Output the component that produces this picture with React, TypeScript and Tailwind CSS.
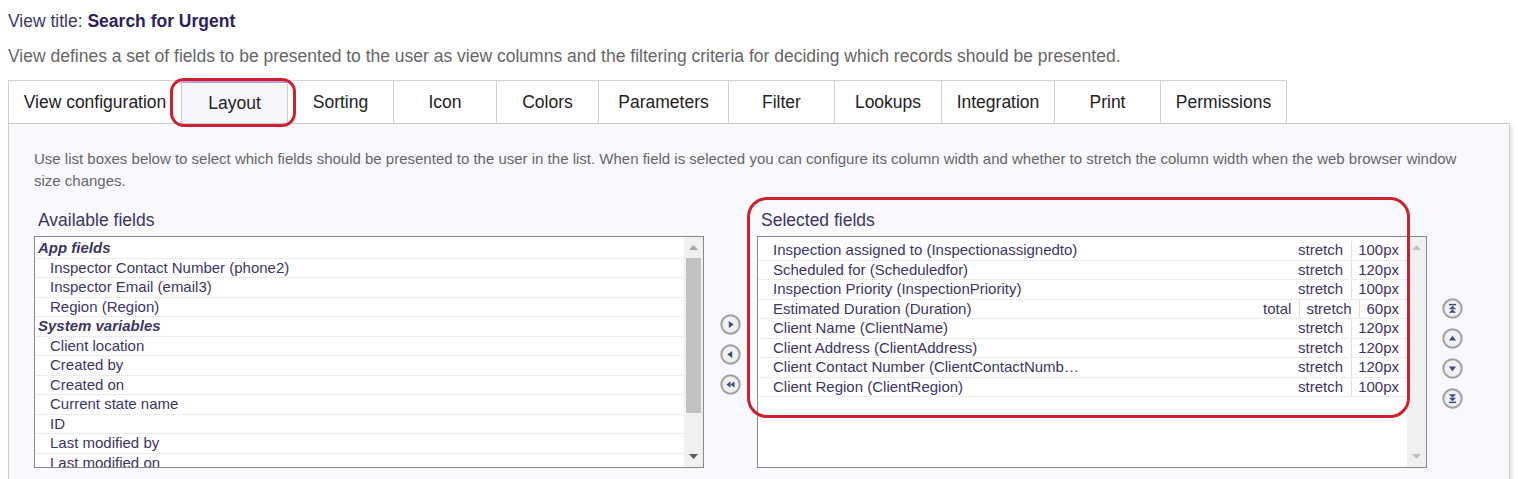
import type { ReactNode } from "react";

const tabs = [
  { label: "View configuration", w: "w-[174px]" },
  { label: "Layout", w: "w-[106px]", active: true },
  { label: "Sorting", w: "w-[106px]" },
  { label: "Icon", w: "w-[103px]" },
  { label: "Colors", w: "w-[102px]" },
  { label: "Parameters", w: "w-[130px]" },
  { label: "Filter", w: "w-[106px]" },
  { label: "Lookups", w: "w-[107px]" },
  { label: "Integration", w: "w-[113px]" },
  { label: "Print", w: "w-[106px]" },
  { label: "Permissions", w: "w-[126px]" },
];

const available: { label: string; group?: boolean }[] = [
  { label: "App fields", group: true },
  { label: "Inspector Contact Number (phone2)" },
  { label: "Inspector Email (email3)" },
  { label: "Region (Region)" },
  { label: "System variables", group: true },
  { label: "Client location" },
  { label: "Created by" },
  { label: "Created on" },
  { label: "Current state name" },
  { label: "ID" },
  { label: "Last modified by" },
  { label: "Last modified on" },
];

const selected: { label: string; width: string; total?: boolean }[] = [
  { label: "Inspection assigned to (Inspectionassignedto)", width: "100px" },
  { label: "Scheduled for (Scheduledfor)", width: "120px" },
  { label: "Inspection Priority (InspectionPriority)", width: "100px" },
  { label: "Estimated Duration (Duration)", width: "60px", total: true },
  { label: "Client Name (ClientName)", width: "120px" },
  { label: "Client Address (ClientAddress)", width: "120px" },
  { label: "Client Contact Number (ClientContactNumber)", width: "120px" },
  { label: "Client Region (ClientRegion)", width: "100px" },
];

type IconKind = "right" | "left" | "allLeft" | "top" | "up" | "down" | "bottom";

function CircleBtn({ kind }: { kind: IconKind }) {
  const arrow = "#3b4c85";
  let shapes: ReactNode = null;
  if (kind === "right") shapes = <polygon points="8.4,6.6 13,10 8.4,13.4" fill={arrow} />;
  if (kind === "left") shapes = <polygon points="11.6,6.6 7,10 11.6,13.4" fill={arrow} />;
  if (kind === "allLeft")
    shapes = (
      <>
        <polygon points="10,6.8 6.2,10 10,13.2" fill={arrow} />
        <polygon points="13.8,6.8 10,10 13.8,13.2" fill={arrow} />
      </>
    );
  if (kind === "up") shapes = <polygon points="6.6,11.8 10,7.4 13.4,11.8" fill={arrow} />;
  if (kind === "down") shapes = <polygon points="6.6,8.2 10,12.6 13.4,8.2" fill={arrow} />;
  if (kind === "top")
    shapes = (
      <>
        <rect x="6.6" y="5.6" width="6.8" height="1.4" fill={arrow} />
        <polygon points="6.6,10.6 10,7.4 13.4,10.6" fill={arrow} />
        <polygon points="6.6,14 10,10.8 13.4,14" fill={arrow} />
      </>
    );
  if (kind === "bottom")
    shapes = (
      <>
        <polygon points="6.6,6 10,9.2 13.4,6" fill={arrow} />
        <polygon points="6.6,9.4 10,12.6 13.4,9.4" fill={arrow} />
        <rect x="6.6" y="13" width="6.8" height="1.4" fill={arrow} />
      </>
    );
  return (
    <svg width="21" height="21" viewBox="0 0 20 20" className="block">
      <circle cx="10" cy="10" r="8.7" fill="#f1f1f4" stroke="#a0a0a0" strokeWidth="2" />
      <circle cx="10" cy="10" r="7.4" fill="none" stroke="#e2e2e2" strokeWidth="0.6" />
      {shapes}
    </svg>
  );
}

function Scrollbar({ thumb }: { thumb: boolean }) {
  return (
    <div className="flex w-[19px] shrink-0 flex-col bg-[#f0f0f0]">
      <div className="flex h-[21px] items-center justify-center">
        <svg width="9" height="5" viewBox="0 0 9 5">
          <polygon points="0,5 4.5,0 9,5" fill={thumb ? "#a8a8a8" : "#c4c4c4"} />
        </svg>
      </div>
      {thumb && <div className="mx-[2px] h-[155px] bg-[#c1c1c1]" />}
      <div className="flex-1" />
      <div className="flex h-[21px] items-center justify-center">
        <svg width="9" height="5" viewBox="0 0 9 5">
          <polygon points="0,0 4.5,5 9,0" fill={thumb ? "#5c5c5c" : "#c4c4c4"} />
        </svg>
      </div>
    </div>
  );
}

export default function App() {
  return (
    <div className="min-h-[479px] bg-white p-2 font-['Liberation_Sans',Arial,sans-serif]">
      <div className="text-[17.5px] leading-[26px] text-[#3b3a5e]">
        View title: <span className="font-bold text-[#2e1e5e]">Search for Urgent</span>
      </div>
      <div className="mt-[9px] text-[17.5px] leading-[26px] text-[#666666]">
        View defines a set of fields to be presented to the user as view columns and the filtering criteria for deciding which records should be presented.
      </div>

      <div className="mt-[11px] flex">
        {tabs.map((t, i) => (
          <div
            key={t.label}
            className={`relative flex h-[43px] items-center justify-center border-t border-r border-[#d0d0d0] text-[17.5px] text-[#222] ${t.w} ${
              i === 0 ? "border-l" : ""
            } ${t.active ? "border-t-[3px] border-t-[#b99bd8] bg-[#f7f5fc]" : "bg-white"}`}
          >
            {t.label}
            {t.active && (
              <div className="pointer-events-none absolute top-[-5px] left-[-12px] z-10 h-[49px] w-[126px] rounded-[14px] border-[3px] border-[#d0202e]" />
            )}
          </div>
        ))}
      </div>

      <div className="border border-[#cccccc] bg-[#f9f8fd] pt-[24px] pr-[22px] pb-[30px] pl-[25px] shadow-[2px_2px_3px_rgba(0,0,0,0.12)]">
        <p className="text-[15px] leading-[22px] text-[#666666]">
          Use list boxes below to select which fields should be presented to the user in the list. When field is selected you can configure its column width and whether to stretch the column width when the web browser window size changes.
        </p>

        <div className="mt-[18px] grid grid-cols-[670px_53px_670px_1fr] grid-rows-[26px_232px]">
          <div className="pl-1 text-[17.5px] leading-[20px] text-[#3c3563]">Available fields</div>
          <div />
          <div className="relative pl-1 text-[17.5px] leading-[20px] text-[#3c3563]">
            Selected fields
            <div className="pointer-events-none absolute top-[-13px] left-[-10px] z-10 h-[221px] w-[663px] rounded-[20px] border-[3px] border-[#d0202e]" />
          </div>
          <div />

          {/* available list */}
          <div className="flex border border-[#8a8a8a] bg-white text-[15px] text-[#3c3563]">
            <div className="flex-1 overflow-hidden pt-[2px]">
              {available.map((f) => (
                <div
                  key={f.label}
                  className={`flex h-[19.5px] items-center border-b border-dotted border-[#dcdcdc] ${
                    f.group ? "pl-[3px] font-bold italic" : "pl-[15px]"
                  }`}
                >
                  {f.label}
                </div>
              ))}
            </div>
            <Scrollbar thumb />
          </div>

          <div className="flex flex-col items-center justify-center gap-[9px] pt-[4px]">
            <CircleBtn kind="right" />
            <CircleBtn kind="left" />
            <CircleBtn kind="allLeft" />
          </div>

          {/* selected list */}
          <div className="flex border border-[#8a8a8a] bg-white text-[15px] text-[#3c3563]">
            <div className="flex-1 overflow-hidden pt-[4px]">
              {selected.map((f) => (
                <div key={f.label} className="flex h-[19.5px] items-center border-b border-dotted border-[#dcdcdc]">
                  <span className="w-[321px] shrink-0 overflow-hidden pl-[15px] text-ellipsis whitespace-nowrap">
                    {f.label}
                  </span>
                  <span className="flex-1" />
                  {f.total && <span className="pr-2">total</span>}
                  <span className={`flex h-full items-center pr-2 ${f.total ? "border-l border-[#dedede] pl-1.5" : ""}`}>
                    stretch
                  </span>
                  <span className="flex h-full items-center border-l border-[#dedede] pr-2 pl-1.5">{f.width}</span>
                </div>
              ))}
            </div>
            <Scrollbar thumb={false} />
          </div>

          <div className="flex flex-col items-start justify-center gap-[9px] pt-[3px] pl-[15px]">
            <CircleBtn kind="top" />
            <CircleBtn kind="up" />
            <CircleBtn kind="down" />
            <CircleBtn kind="bottom" />
          </div>
        </div>
      </div>
    </div>
  );
}
